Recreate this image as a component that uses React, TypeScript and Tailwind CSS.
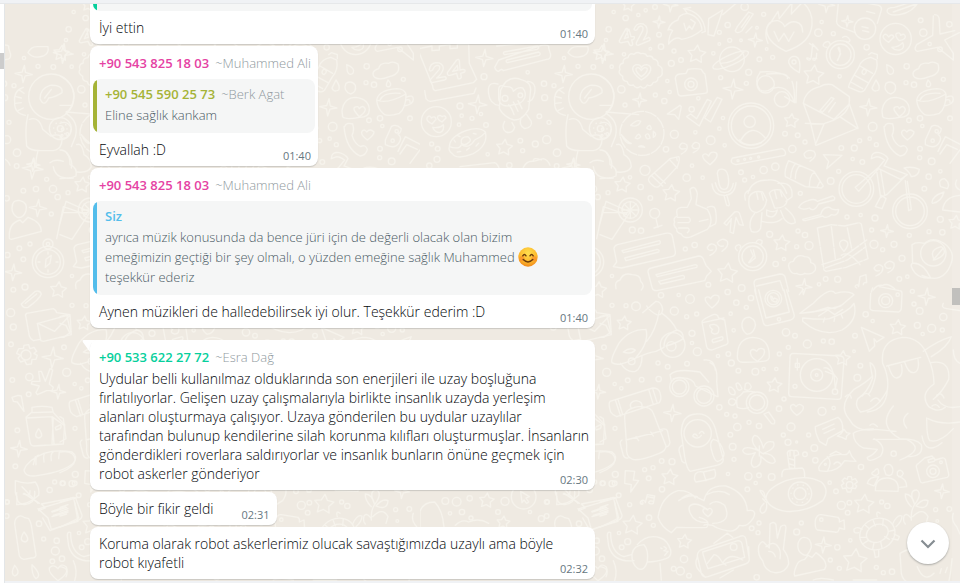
import type { ReactNode } from "react";

type Dot = [number, number, number];

function starPath(cx: number, cy: number, r: number, points = 5, inner = 0.52, turn = 0.1) {
  const parts: string[] = [];
  for (let i = 0; i < points * 2; i++) {
    const radius = i % 2 === 0 ? r : r * inner;
    const angle = (Math.PI * i) / points - Math.PI / 2 + turn;
    parts.push(`${(cx + radius * Math.cos(angle)).toFixed(1)} ${(cy + radius * Math.sin(angle)).toFixed(1)}`);
  }
  return `M${parts.join("L")}Z`;
}

function Dots({ items }: { items: Dot[] }) {
  return (
    <>
      {items.map(([x, y, r], i) => (
        <circle key={i} cx={x} cy={y} r={r} />
      ))}
    </>
  );
}

function Stars({ items }: { items: Dot[] }) {
  return (
    <>
      {items.map(([x, y, r], i) => (
        <path key={i} d={starPath(x, y, r)} />
      ))}
    </>
  );
}

function Sparkles({ items }: { items: Dot[] }) {
  return (
    <>
      {items.map(([x, y, r], i) => (
        <path key={i} d={starPath(x, y, r, 4, 0.28, 0.08)} />
      ))}
    </>
  );
}

const upperDots: Dot[] = [
  [41, 36, 5], [77, 54, 8], [115, 45, 5], [137, 31, 5], [165, 21, 7], [26, 88, 8], [18, 120, 5], [72, 163, 5],
  [151, 146, 4], [183, 140, 8], [177, 104, 7], [222, 153, 6], [214, 190, 9], [243, 180, 7], [35, 200, 5], [202, 243, 5],
  [64, 268, 11], [209, 276, 5], [166, 285, 6], [193, 303, 8], [75, 315, 6], [295, 295, 5], [340, 160, 5], [383, 75, 8],
  [358, 97, 6], [389, 121, 6], [423, 121, 4], [358, 132, 4], [434, 20, 11], [491, 43, 6], [471, 83, 4], [478, 178, 7],
  [500, 147, 4], [518, 172, 6], [446, 217, 9], [362, 233, 6], [439, 250, 6], [665, 66, 5], [655, 98, 11], [700, 101, 6],
  [800, 142, 8], [719, 229, 5], [962, 61, 7], [970, 98, 11], [1048, 73, 8], [989, 132, 5], [1020, 148, 7], [920, 199, 8],
  [918, 248, 6], [942, 254, 8], [1030, 238, 6], [927, 361, 7], [960, 355, 8], [1050, 355, 7], [967, 378, 5], [818, 380, 13],
  [829, 434, 6], [809, 416, 5], [779, 422, 6], [763, 444, 9], [724, 444, 7], [758, 477, 5], [787, 486, 7], [716, 514, 6],
  [555, 401, 7], [593, 406, 7], [615, 426, 6], [577, 447, 11], [526, 500, 11], [491, 510, 11], [423, 517, 7], [434, 540, 6],
  [459, 531, 5], [369, 354, 5], [358, 386, 5], [275, 328, 8], [286, 397, 5], [223, 403, 12], [332, 421, 13], [374, 436, 5],
  [198, 448, 8], [276, 497, 5], [260, 533, 11], [308, 533, 5], [135, 511, 15], [90, 532, 5], [122, 561, 8], [151, 594, 7],
  [24, 578, 6], [97, 690, 9], [123, 692, 8], [284, 735, 8], [256, 747, 6], [36, 828, 5], [692, 543, 10], [601, 580, 6],
  [986, 530, 8], [959, 473, 6], [995, 484, 10], [960, 446, 7], [1021, 514, 5], [973, 566, 7], [1021, 658, 9], [987, 695, 6],
  [1027, 697, 8], [928, 706, 6], [825, 654, 9], [815, 690, 6], [782, 645, 5], [741, 651, 6], [822, 733, 12], [848, 749, 6],
  [882, 733, 9], [906, 775, 9], [898, 837, 7], [922, 830, 5], [713, 838, 9], [677, 837, 7], [627, 737, 12], [590, 740, 6],
  [615, 705, 8], [594, 693, 6], [509, 703, 9], [552, 777, 5], [527, 792, 8], [657, 853, 5], [325, 854, 7], [425, 864, 10],
];

const lowerDots: Dot[] = [
  [36, 46, 6], [78, 47, 6], [108, 49, 13], [183, 16, 8], [236, 15, 5], [270, 27, 13], [223, 63, 12], [260, 80, 6],
  [290, 72, 6], [383, 6, 8], [409, 38, 8], [439, 52, 6], [453, 24, 8], [392, 71, 5], [401, 121, 5], [276, 130, 9],
  [276, 159, 5], [292, 185, 12], [12, 172, 7], [20, 247, 12], [44, 282, 5], [83, 271, 7], [64, 295, 5], [125, 269, 7],
  [176, 267, 8], [203, 230, 7], [174, 219, 6], [261, 221, 7], [354, 198, 5], [385, 192, 7], [394, 219, 9], [415, 242, 7],
  [466, 245, 10], [491, 237, 5], [529, 237, 5], [538, 192, 6], [565, 172, 6], [558, 127, 11], [585, 137, 7], [622, 162, 12],
  [670, 153, 6], [695, 155, 8], [765, 137, 7], [797, 73, 8], [818, 93, 5], [893, 14, 5], [937, 4, 6], [942, 42, 6],
  [959, 63, 10], [1030, 81, 11], [952, 106, 9], [995, 115, 12], [968, 132, 5], [1027, 120, 6], [781, 227, 7], [772, 263, 10],
  [762, 184, 4], [552, 327, 6], [537, 356, 8], [573, 411, 12], [626, 435, 6], [666, 364, 12], [701, 354, 5], [358, 352, 8],
  [380, 373, 6], [405, 378, 6], [412, 411, 11], [447, 397, 6], [477, 408, 8], [391, 434, 7], [398, 470, 10], [402, 508, 6],
  [550, 435, 6], [564, 457, 9], [590, 456, 3], [643, 474, 10], [615, 493, 7], [646, 511, 8], [384, 552, 5], [445, 559, 11],
  [477, 556, 7], [515, 561, 10], [467, 579, 5], [442, 598, 7], [783, 531, 8], [881, 491, 8], [689, 578, 5], [708, 604, 7],
  [724, 646, 12], [748, 638, 7], [743, 668, 7], [845, 636, 6], [862, 648, 8], [45, 415, 6], [46, 553, 9], [36, 581, 9],
  [9, 580, 7], [134, 539, 6], [159, 533, 6], [185, 513, 7], [216, 515, 9], [146, 565, 7], [186, 598, 8], [56, 616, 7],
  [89, 644, 6], [125, 639, 4], [147, 683, 8], [160, 706, 6], [57, 729, 5], [83, 755, 9], [65, 772, 7], [6, 806, 8],
  [252, 807, 11], [221, 836, 7], [241, 843, 12], [267, 857, 7], [455, 715, 7], [477, 699, 6], [474, 728, 6], [470, 862, 8],
  [590, 726, 9], [604, 699, 6], [712, 772, 8], [751, 751, 5], [691, 810, 6], [718, 835, 6], [829, 832, 6], [850, 848, 6],
  [876, 845, 8], [1007, 659, 6], [1048, 657, 7], [1012, 693, 4],
];

const bandDots: Dot[] = [
  [480, 318, 9], [485, 347, 5], [516, 355, 6], [543, 342, 5], [552, 230, 9], [558, 375, 7], [563, 463, 5], [477, 374, 5],
  [661, 422, 7], [668, 452, 6], [706, 432, 9], [740, 419, 12], [718, 349, 7], [747, 367, 6], [734, 293, 9], [732, 251, 8],
  [762, 257, 6], [683, 217, 5], [792, 174, 5], [771, 458, 11], [834, 199, 6], [880, 201, 7], [395, 432, 6], [413, 446, 7],
  [388, 497, 8], [411, 478, 9], [628, 496, 8],
];

const edgeDots: Dot[] = [
  [50, 18, 7], [20, 115, 8], [70, 92, 7], [108, 87, 8], [140, 58, 6], [159, 87, 11], [173, 111, 8], [154, 162, 6],
  [90, 252, 6], [58, 265, 7], [70, 298, 7], [22, 285, 8], [40, 389, 7], [75, 381, 9], [32, 458, 12], [40, 501, 9],
  [33, 553, 7], [37, 660, 7], [88, 651, 11], [52, 811, 7], [46, 919, 7], [149, 990, 8], [164, 966, 6], [22, 1026, 6],
  [20, 1068, 7], [117, 1091, 8], [131, 1137, 6], [170, 1142, 8], [166, 1173, 12], [157, 1204, 7], [86, 703, 7],
];

function Wallpaper() {
  return (
    <svg aria-hidden="true" className="pointer-events-none absolute inset-0 h-full w-full">
      <defs>
        <pattern id="doodles" x="420" y="0" width="540" height="583" patternUnits="userSpaceOnUse" viewBox="420 0 540 583">
          <g fill="none" stroke="#f6f3ec" strokeWidth="4" strokeLinecap="round" strokeLinejoin="round">
            <g transform="translate(600 0) scale(.33333)">
              <Dots items={upperDots} />
              <Stars items={[[290, 163, 28], [641, 226, 31], [574, 363, 22], [67, 555, 24], [213, 580, 26], [545, 730, 25], [382, 820, 31], [85, 15, 20], [1067, 668, 22], [4, 160, 24]]} />
              <Sparkles items={[[177, 66, 18], [466, 120, 21], [399, 267, 30], [119, 300, 21], [805, 322, 26], [861, 693, 19], [212, 14, 22], [680, 14, 24], [612, 860, 24], [742, 64, 17]]} />
              <path d="M78 86l-20 36q0 8 8 6l18-4 6 12q8 2 8-4l-3-12q10-2 8-10l-10 0-6-22q-8-2-6 4l4 20-12 4 12-26q-2-6-7-4zM102 88q8-22 28-16 18 10 8 34l-8 14 16-8q8 4 2 10l-34 14q-8-2-4-10l18-34q4-14-6-14-8 2-10 10-6 6-10 0z" />
              <path d="M122 161q14-4 20 8 14-4 18 8 16 2 14 18 16 8 12 20 4 12-12 18 0 14-14 14-6 14-18 8-10 16-20 4-14 10-22-4-16 4-18-10-16-2-14-16-16-10-8-20-6-16 10-20-4-14 14-16 4-16 18-10 8-10 20-2z" />
              <path d="M124 240q-26-20-26-34 2-12 14-12 10 0 12 10 4-10 16-10 14 2 12 16-4 16-28 30z" />
              <path d="M124 230q-18-14-16-24 8-8 16 6 8-14 18-6 0 12-18 24z" />
              <path d="M240 222l18-2 6-12q22-4 40 0l6 10q6 2 6 10l6 44q0 8-8 8l-70 8q-8 0-10-8l-8-44q0-12 14-14z" />
              <circle cx="273" cy="253" r="19" /><circle cx="273" cy="253" r="9" />
              <path d="M262 40q40 10 44 50-30 24-62 28-8-8-24 0-12 8-14 14 0-24 12-40-10-6-14-2 8-24 30-30 0-16 28-20zM250 26q60 10 66 68l-10 4M252 70l6 22 10-14 8 10 10-20-14-10M262 40l-10-14 20-4" />
              <path d="M368 30l-26 78-18-4 2-48zM368 44l52-44M412 80l34-44 14 6-34 50q-16 12-20 0zM424 82l24-34M456 80l-18 18" />
              <circle cx="396" cy="178" r="37" /><ellipse cx="392" cy="180" rx="58" ry="15" transform="rotate(-24 392 180)" /><path d="M362 190q40 0 70-34" />
              <path d="M504 130q-16-40 8-62l22-34 4 22 38-48-2 34 34-36q32 30 28 68-4 56-78 80-62-30-58-70 6-24 34-22 16 6 20 18 16-18 34-14 20 4 20 30M522 94l14 30 16-24 14 24 16-28" />
              <path d="M728-4l108 20q10 4 8 14l-12 40M710 62q-2 12 14 20l42 16M716-2l-6 64M800 34l24 6M786 80l18 4M788 92l18 4" />
              <circle cx="795" cy="86" r="32" />
              <path d="M862 36q-4-14 22-14l76-24q-20 40-62 46-30 4-36-8zM880 36l68-24" />
              <circle cx="887" cy="117" r="47" />
              <path d="M866 127q-20-12-16-20 8-10 16 4 10-12 16 0zM898 122q-16-16-8-22 10-4 12 6 12-8 14 4 0 8-18 12zM876 142q20 0 32-14 8 16-8 22-16 2-24-8z" />
              <path d="M1004 44q14 0 14 18l2 40 44-10M1000 48l-2 58-48 28q-10 16 2 20l60-12 48 38 0-20-26-40 44-22" />
              <circle cx="721" cy="164" r="42" /><circle cx="721" cy="164" r="32" /><path d="M722 162l-8-18M722 162l-10 20M716 142q6 6 4 20l-6 18M680 142q-16-2-8-12 14-12 18 2M728 112q12-8 22 8-2 10-12 4" />
              <path d="M630 176q-14-6-8 2 10 8 12-10l4-36 16 18M650 176q-16-4-10 4 10 4 10-20M628 130l22 14" />
              <path d="M598 218q-36-20-32-36 6-16 22-12 16 6 10 48z" /><circle cx="582" cy="186" r="6" />
              <path d="M812 172l18 8q6 30-14 52l-22 38q-8 10-24 2t-24-10q-2-8 30-60 6-24 36-30zM806 164l8-6 18 6 0 12M780 198l38 22M752 246l36 20M764 226l40 22M792 206q14 8 0 18-12-4 0-18z" />
              <path d="M860 194q26 10 20 24-12 12-18-4zM828 240q14 20 8 30-16 8-20-6zM858 250q18-10 28 6 4 20-14 26-24-10-14-32zM984 240q14 14 4 20-12 2-8-10z" />
              <path d="M944 232q-14-18 12-26 4-20 30-16 12-8 28 2 10 30-26 38-28 12-44 2z" />
              <path d="M480 216q60-6 88 18M500 222q70-6 62 14M576 244q8 20 8 64l-30-18M590 246l-2 62M480 218q-20 26 0 52 20 10 40-8M522 264q30-8 48 18 8 8 12 24" />
              <circle cx="497" cy="253" r="26" /><circle cx="546" cy="298" r="23" />
              <path d="M610 310q6-40 50-50 16-10 36-6l52 36q4 40-28 60-20 14-46 20M610 310l22 60 16 66 126-52-26-72-46 46zM616 370l56 2-26 62M722 352l52 34M660 332l34-40 8 4-34 40zM686 336l20-28" />
              <path d="M202 342l38-26 4 4-8 38-12-14zM260 350l12-8 18 14 32-58 12 6-36 74zM314 354l38-62 14 6-34 68z" />
              <circle cx="453" cy="377" r="68" /><circle cx="453" cy="377" r="59" /><circle cx="449" cy="365" r="17" /><path d="M420 424q34-60 76-10M418 420q20 24 66 8" />
              <path d="M846 332q6-40 42-40 40 6 40 38 0 22-30 22-44 8-50-2zM898 350q-22-22-14-28 10-6 14 4 12-14 18 2 0 10-18 22z" />
              <path d="M950 300q6-30 60-34 24 0 28 18 0 40-20 56-30 10-44 4-22-16-24-44zM950 300q30 14 88-18M960 300q10-24 60-20M1038 292q22-10 22 6t-28 20M1038 300q14-4 12 8" />
              <circle cx="126" cy="400" r="66" strokeDasharray="34 6" /><path d="M92 376q20-20 30-12-8 20-30 12zM106 414q10-20 16-4-6 10-16 4zM140 384q10-16 14 2-6 6-14-2zM136 406q10-12 14 8-10 8-14-8zM64 404q20 24 30 26-14 6-30-26zM116 440q10-6 18 2zM160 394q14 10 0 18z" />
              <path d="M0 228q40 20 42 60-4 40-24 48l98 8M0 316h34M18 340q40 24 28 70l-12 30M0 370q22-10 34 14-4 36-34 30M50 434q16-8 22 30 20 10 22 36-10 20-42 16M0 450q30 0 30 44 24 10 18 34-20 8-48 8" />
              <circle cx="8" cy="388" r="4" /><circle cx="22" cy="402" r="4" /><circle cx="6" cy="406" r="3" />
              <path d="M244 462q24-12 16-28-16-12-22 6 4 10 18 6M280 458q22-10 18-26-14-12-22 6 4 12 18 6M330 494q-24-18-22-28 8-10 18 2 6-16 22-10 12 10-18 36z" />
              <path d="M148 532l62-56 26-6q6 4-4 30l-56 60q-10 4-18-4-18-14-10-24zM164 520l32 30M156 528l32 30M208 478l24 26M230 474l2 8" />
              <path d="M352 520q2-16 18-12 14 2 16 34 0 26-14 26-14 0-16-24zM336 552q4 34 36 34t36-38M346 548q6 30 28 30 22-2 26-28M372 586l8 30q10 4 8-4l-8-28" />
              <path d="M398 474l148-28q16 8 8 20l-146 28q-20-4-12-18z" /><g><circle cx="414" cy="482" r="3" /><circle cx="434" cy="478" r="3" /><circle cx="452" cy="475" r="3" /><circle cx="476" cy="471" r="3" /></g>
              <path d="M630 484q24-16 12-30-20-8-30 8 2 18 22 10M670 464l56 2-46 40 6-22z" />
              <path d="M566 482l76 32 28 44-6 6-48-4-60-30q-4-20 10-48zM588 490q-14 12-16 42M600 496q-14 14-14 40M644 516q-16 10-16 44M660 544l-8 16" />
              <path d="M854 380q4-14 24-8 6 20-2 34 8 26 26 34 14-8 20 8-4 18-22 20-42-20-48-88zM922 420q-22-16-16-26 8-8 14 2 10-12 22 0 0 10-20 24zM976 420l18-40q14-10 30 6-2 14-10 16 14 12 2 28-12 18-40 4zM1014 454l22-44 46 24M1020 462l20-28 32 14M1050 490l30-40" />
              <circle cx="1010" cy="394" r="5" /><circle cx="998" cy="422" r="5" />
              <circle cx="769" cy="567" r="52" /><circle cx="769" cy="567" r="43" /><circle cx="930" cy="634" r="52" /><circle cx="930" cy="634" r="43" />
              <path d="M766 562l72-62 16-20q-20-14-30-8l-10 4q0-22 24-18 20 6 26 18l-12 22 70 26-20 14-66-32-60 68zM830 512l12 80 18-8 54-54M842 512l12 72M916 542l10 90 8-4-12-84M826 620l18-34 14 10-12 30zM912 504q24-6 46 4-2 20-24 22-6-16-22-26z" />
              <path d="M444 580q10-40 60-40 40-4 56 40M436 600q-8-24 14-30M534 550q46-6 42 40l-18 14M448 590q10-20 40-14l12 24q-4 30-30 38-30-4-22-48zM508 580q8-14 34-10l20 30q-4 26-38 24zM470 578l4 20M484 576l6 24M524 572l6 24M540 570l6 20M500 630q20 10 32 0-8 30-32 16zM464 640q-22 26-10 54 20 8 28-10l4-46M556 624q30 24 30 44-18 10-34-12l-10-24M486 664q40 10 60-8" />
              <path d="M270 568q16-16 22 14l-4 32 34 14q22 36 0 60l-48 22q-22 8-30-8-16-4-14-16-12-10-6-20-6-12 8-18-8-24 12-26h18l12-26zM322 622q20-8 24 6 6 32 0 44l-16 8M298 664l26-6M232 652h34q10 10 0 16h-32M236 684h28q8 6-2 14" />
              <path d="M372 670l32-34q14-4 16 8l10 32-12-2-10-22-8 48-10-4 4-40-14 20z" />
              <path d="M596 622q10-16 28-20 20-8 28 2l46-16q10 4 4 12l-46 12q-14 26-28 12-20 8-32-2zM608 658l54-14q6-24 26-22 10 10 28 6-2 22-22 16-16 14-26 4l-52 14q-8 0-8-4z" />
              <circle cx="91" cy="630" r="36" /><circle cx="91" cy="630" r="25" /><path d="M91 605v50M66 630h50M72 612l36 36M108 612l-36 36M0 670l18-66 72 32-54 82-36-14M10 638h72" />
              <circle cx="164" cy="640" r="15" /><path d="M168 656l6 26M162 684l24-8" />
              <path d="M52 734l144-34q20-4 22 12l8 42q2 14-12 16l-150 34-24-4 10-14-8-40q0-8 10-12zM66 752l112-30q6 4 0 10l-108 26zM74 774l98-26q8 2 4 8l-98 26z" />
              <path d="M154 804l142-36q12 0 16 14l6 14 16 18-14 14-6 14-144 30q-12 0-14-10l-12-46q0-10 10-12zM168 824l118-30q8 2 4 8l-118 28zM176 844l72-18q8 2 4 10l-70 16z" />
              <path d="M330 766q24-12 18-28-16-14-26 4 2 12 16 8M366 754q22-14 16-30-16-14-30 4 4 14 18 10M828 828q24-10 20-28-14-14-26 4 4 12 16 8M864 818q22-10 18-28-16-14-28 4 2 14 18 10" />
              <circle cx="458" cy="770" r="42" /><circle cx="458" cy="770" r="32" /><path d="M452 750l8 18-14 20M460 750l6 24-18 14M412 752q-14-12 4-18 10 4 4 10M468 728q4-14 18-6 2 10-6 12" />
              <path d="M568 806q-8-20 12-22 10-24 34-14 20 0 18 18 18 4 14 22-10 16-32 10-12 8-24 0-16 4-22-14z" />
              <path d="M652 684l42-10 40 4 44-10 6 4 20 104-66 26-60 12-6-4zM666 794l60-20 74-54M676 804l66-24 56-40M694 680l12 96M742 684l14 66M724 766q20-16 56 28" strokeDasharray="60 5" />
              <path d="M732 754q-20-22-10-30 10-8 20 2 6 10-10 28z" />
              <path d="M936 734q12-10 38-4 24-22 58 0 36 26 20 64-24 60-86 32M936 734l2 56q30-4 54 44-30 2-46-14-20-26-8-30M1004 780q-20-30 20-40 26 20-20 40zM1000 780l30-36" /><circle cx="1000" cy="760" r="38" />
              <path d="M48 866q-6-22 12-26 10-24 36-16 26 0 26 20 14 14 2 26M468 880l-6-30q0-10 8-12l70-16q14 0 16 12l10 40M470 858l70-16 10 30M770 864q-10-6 2-10l4 6 4-30 18-6 2 24q-10-2-10 6M820 870q10-16 28-14 14-8 36 10" />
              <path d="M996 608q0-20 36-32-8 30-34 34M1022 560q-10-22 12-24 18 14 8 30zM1028 630q4-40 52-44M1028 630l52 6M1070 540q-10 20 10 30" />
            </g>
            <g transform="translate(600 290) scale(.33333)">
              <Dots items={lowerDots} />
              <Stars items={[[72, 100, 22], [893, 113, 24], [728, 205, 23], [523, 286, 23], [209, 562, 25], [97, 706, 30], [253, 755, 22], [792, 643, 30], [765, 813, 37]]} />
              <Sparkles items={[[217, 369, 26], [980, 20, 26], [1026, 604, 22], [670, 765, 24]]} />
              <path d="M128 68l40-34q16 0 20 24-2 20-18 16-20-10-30-26M178 62q-10 60-38 92M186 70q30 20 44 50M138 118q-50 0-80 40-28 50-22 60 20 14 72-14 40-18 60-20l24-12q0-40 40-52 18 4 18 26-20 14-52 22M138 118q10 40-30 84M62 220q20 30 44 24 20-10 20-46M70 186q20-16 36-6-12 14-36 6z" />
              <circle cx="218" cy="165" r="37" /><circle cx="214" cy="169" r="14" /><circle cx="95" cy="214" r="10" />
              <path d="M0 80l20-6 12 52-20 16H0M0 100l18 6 12 24" />
              <path d="M336 54q-24-20-20-30 8-8 16 2 8-16 24-8 8 14-20 36z" />
              <path d="M306 96q0-8 34-22 12-4 16 10l18 6 10 66q0 8-12 10l-36 14q-14 0-16-10zM308 98l64-14M336 118q-14-14 0-14 12-4 20 8 4 20-12 20-16-4-6-14M338 148l28-8q6 4 0 10l-26 8q-6-4-2-10z" />
              <path d="M426 100q4-20 24-18 22 10 14 32-8 20-24 18-16-12-14-32zM412 200q0-56 46-58 50 2 50 56 2 14-20 16-50 4-66 2-10-4-10-16zM472 214q-26-16-20-32 8-8 18 2 8-14 22-6 8 16-20 36z" />
              <path d="M464 0l26 98q4 12 16 8l66-16q14-6 10-18L560 0M476 0l22 84 70-18L552 0" /><circle cx="520" cy="26" r="25" /><circle cx="520" cy="26" r="18" /><circle cx="537" cy="88" r="5" /><path d="M512 18q0 18 18 18l2-8-8-4-4 4-4-8z" />
              <path d="M598 14l12-16M600 70l40-30Q690-12 706 10q40-10 56 4l-40 34q-56 16-122 22zM608 84q60 6 80 2 60-22 74-46 14 50-36 80-60 24-118-26zM640 66l44-14 20 4 26-14M656 78l28-18 20 14 24-16M670 96l4-12M702 94l2-10M728 84l-4-10" />
              <path d="M814 6l4-12M812 10l-2 42q0 10 10 10l76 4q8-4 8-12l2-44q0-8-8-8l-60-12" /><circle cx="857" cy="32" r="21" /><circle cx="857" cy="32" r="12" />
              <path d="M784 112l68 30-22 14-8-10 2 22-16 16z" />
              <path d="M578 190l144 8q10 2 10 12l-8 108q0 10-10 10l-140-8q-8 0-8-10l4-110q0-8 8-10zM592 206v34M586 220h12v12h-12zM672 234q10-4 26 14l14 18-6 30M676 244l26 10 4 42" /><circle cx="650" cy="255" r="49" /><circle cx="650" cy="255" r="18" /><circle cx="650" cy="255" r="4" /><circle cx="585" cy="289" r="6" /><circle cx="705" cy="305" r="8" />
              <path d="M848 220q-8-70 60-78 56 0 76 60 18 40 18 80-44 30-16 68 30 20 50 2M848 220q20 40 14 80-30 60-80 66-20-20-8-40 30-20 44-62-6-30-8-46 20 10 16 44-10 40-20 50M862 300q-4 60-60 66M818 258q-20 20-56 40-50 50-14 90 20 40 80 30l60 6M860 228l102-26M866 230q10 34 24 34 22-4 14-40M914 216q10 34 28 32 18-6 12-40M880 348q-50 60 20 98 50 0 64 18 8 36-44 36M924 370q-24 20-4 44M760 430q10-10 60-14M760 430q0 30 30 44l42 4q-10 16-30 24 0 20 40-4 20-30-20-52M820 448l100 0q60 30-20 62M966 438q10 60 60 20M970 184q40-30 84-44-10 30-60 60M992 218q60-10 54 50-20 40-46 60M1014 330q20 30 66 20M980 384q0 60 10 68 30 8 70-36M984 386q40 20 96 10" />
              <path d="M736 320q14-14 18 4M786 318q14-16 24 0M812 334q18-20 28 0M810 406q10-10 22 4M1010 316q14-12 22 8M996 348q12-10 22 4" />
              <path d="M210 254q20-20 90-8l26 30M210 254l4 20M330 218q24 10 20 56l4 46M312 210q30-4 34 30M220 266q60-10 66 22l66 32" /><circle cx="238" cy="291" r="29" /><circle cx="238" cy="291" r="21" /><circle cx="312" cy="318" r="30" /><circle cx="312" cy="318" r="22" />
              <path d="M386 300q-2-12 8-8 16 12 10 22-16 2-18-14zM386 332q8-12 22 0-2 14-12 14-12-2-10-14zM408 282q8-10 18 14-14 14-18-14zM436 282q10-10 18 8-6 16-20 8zM410 324q16-10 20-18 24-4 34 0M412 352q-4-20 0-28M412 352q18 8 34 0M492 372l14-6 18 26q2 14-10 8z" /><circle cx="471" cy="338" r="32" /><circle cx="471" cy="338" r="23" />
              <path d="M590 376q-22-18-18-28 8-10 16 2 10-14 22 0 2 14-20 26z" />
              <path d="M30 334l128-40q18 0 22 14 6 20-2 30l-128 42q-12-4-18-14-8-24-2-32zM46 330l16 48M54 328l14 46M146 298l14 46M158 296l14 44M74 386q-4-28 40-36 40-2 46 20l38 98q0 14-20 22-60 24-80 18-22-6-18-40zM66 450q-8 4-4 16l8 30q4 10 14 8M182 418q16-4 20 4l8 36q-4 14-12 12M78 450l110-28M94 356q-10-20 14-24 24 4 16 20M108 440l8 12M152 426l8 12" />
              <path d="M244 430q0-56 44-58 50-4 62 60l20 76q0 14-20 18l-80 18q-10-8-16-44zM246 466q-12 6-8 20l8 28q6 6 10 4M340 448q-12 10-6 30 10 40 20 36 18-4 18-24-10-40-32-42zM286 552q8-10 24-6l34-8q6 20-2 26-26 8-54 12-8-8-2-24zM310 546l8 26M278 438q6-12 14 0M298 430q8-12 14 0M280 440q14 10 24-4" /><circle cx="293" cy="430" r="41" />
              <path d="M476 482q-30-30-12-46 16 0 26 38 6-24 30-18 10 20-30 34 30 0 36 24-10 18-44-16 6 30-20 34-18-10 4-44-30 12-38-6 6-18 48 0zM466 476l24 16M478 468v30" />
              <path d="M646 410l68-28q16 10 14 40l-44 24-6 20-20-12q-14-30-12-44zM668 418l34-16M672 430l32-14M732 418l8 10 10 2-10 8-2 10-12-6-14-4 10-6z" />
              <path d="M656 532q24-44 78-38 10 0 14-12l8 18 12 14q-20 0-34-2-24 40-76 30zM682 500q16 14 0 44M702 522q10-12 20 0M690 494l18-10 16 8" /><circle cx="676" cy="523" r="3" />
              <path d="M562 488q4-10 20-6 14-4 14 12l-12 4v38l-16-2zM570 484v14M582 484v14M568 506l14 4M568 522l14 4M546 560q-2-20 10-22l50-4q8 2 8 26M498 626q0-30 60-54 60-20 106 4 26 24 4 56-50 36-110 32-50-8-60-38zM498 628q-24-32-16-26 12-2 14 26zM488 626l12 12M492 640q-20 20-6 30 16-4 14-28" /><circle cx="600" cy="611" r="35" /><circle cx="600" cy="611" r="18" /><circle cx="600" cy="611" r="27" strokeDasharray="1 16" />
              <path d="M76 542l28 2-4 26 16 2-24 34 2-22-20-4zM128 642q-12-2-4-10 10-4 12 6l6-24 22 4-4 22q-8 4-14-2 2-8 14-4M142 620l20 4" />
              <path d="M174 682q10-64 60-80 28-2 48 16l30 14q10-48 66-44 60 20 64 74 20-4 22 8 0 16-20 32-10 8-26 4-12 22-38 16-30-6-42-16-26-4-26 0M338 700q60-2 36-54-24-20-44-4M322 698q-40 0-52-30-10-24 14-26 20 2 36 16M174 682q10 30 40 46l16-16q60 2 90 0 14-20-22-30M236 632q30-20 56-12M320 614q40-20 68 0M246 624q30-20 40 0" /><path d="M324 680q-20-14-14-22 8-6 12 2 8-10 14 0 4 8-12 20z" />
              <path d="M744 560l10 0 2 10 10-4 6 10-8 6 6 6-4 8-10-2-4 12h-10l-4-12-10 2-4-10 8-6-6-8 8-8 8 4z" /><circle cx="749" cy="585" r="10" />
              <path d="M852 536q4-16 18-12 14 10 6 28-6 8-18 2zM822 544q14-18 14 6-10 12-20 2-2-4 6-8zM892 546q10-12 18 4-6 16-18 6zM826 602q0-40 38-38 36 4 30 40zM802 580q4-20 34-20l-14 28zM896 560q24 6 24 30l-20 2" />
              <path d="M956 520q-10 4-6 14l10 38q2 8 10 6l72-16q6-4 4-10l-10-44q-4-6-10-4l-20 6-10-12-22 6zM984 510l18-6q6 6 0 10l-16 4z" /><circle cx="999" cy="544" r="19" /><circle cx="999" cy="544" r="9" /><circle cx="1023" cy="517" r="4" />
              <path d="M934 690q-2-30 10-46M944 644q-20-44 6-44 18 10-6 44zM934 650q-20-20-18-38 20 0 28 32M948 648q20-24 36-16-2 30-36 16M938 680q30-30 46 0l-6 20M934 686q-14-20-22-8-4 16 4 24" />
              <path d="M646 692q4-20 18-18l50 8q6 4 4 14l14-6 2 28-16-4q-2 16-14 12l-52-6q-8-4-6-28z" /><circle cx="664" cy="689" r="5" />
              <ellipse cx="832" cy="732" rx="54" ry="46" transform="rotate(-24 832 732)" /><ellipse cx="832" cy="730" rx="34" ry="26" transform="rotate(-24 832 730)" />
              <path d="M780 742l18 0M788 762l16-10M818 778l4-20M846 774l-4-20M868 748l-14-8M884 720l-18 4M850 686l-2 20M820 692l6 16M796 706l12 10M878 702q14-30 28-24 0 16-18 32M776 728q-16 4-14-10 10-10 24 0M832 680q-6-20 8-10M882 732l16 8-4 10-18-4M822 782l4 20 10-2 0-18" />
              <path d="M476 768q10-22 20-6l12 12 2-72q12-10 18 2l4 40 10-34q14-10 16 2l-8 66q16 20 16 44-10 28-42 26-30-4-36-36-16-16-12-44zM498 770q24-20 36 0 10 10 6 36M506 784q16 0 20 16" />
              <path d="M612 742q22 0 22 30-10 30-24 22-20-10-16-34 6-18 18-18zM590 826q4-14 24-18l10-12 12 6 12-14q30 20 30 40l-4 10-90 20q-4-12 6-32z" />
              <path d="M302 780l116-40q16-8 20 8l10 60q0 10-12 14l-112 38q-16 4-20-10l-12-52q0-12 10-18zM308 786l106-34q10 0 12 10l8 40-110 34q-14-36-16-50zM322 820l20-26q12 0 24 22l12 10M370 816q20-30 58-6M342 760l40-30 16 12M292 800q-10 24 4 40l20 22M446 770l2 40M400 840l-40 24" /><circle cx="401" cy="771" r="10" />
              <path d="M32 728q-10-6-10 10l4 30q14 50 76 44M32 728q0 60 40 72l22-6M96 792q4-26 36-28 14 14 10 50-8 30-28 22-20-14-18-44zM112 764q30-34 70-20 20 6 30 36 4 20-14 26-30 10-54 10M182 774l4 2M192 770q14 6 0 12l12 2-10 12M180 820l4 50M40 812q14 30 4 60M0 830q30 4 18 30" />
              <path d="M900 790l4 60q4 20 20 28M900 790q40-24 70-8M1056 806l-4 40-6 32M952 830q20 50 50 20M1020 850l4-14M1036 848l6-16M1060 670q-8 20 10 40l10 22M640 870q20-10 60 0M760 870h70" />
              <path d="M0 380l10 6 8 60-18 10M0 486q40-6 46 22-4 24-46 40M0 636l40-14 16 62-36 18-20 10M0 652l24-8M0 664l24-8M0 678l20-6" />
              <path d="M1030 40q-8 14 10 16l40 6M1060 180q0 30 20 40" />
            </g>
            <g transform="translate(300 0) scale(.33333)">
              <Dots items={bandDots} />
              <Stars items={[[613, 443, 25]]} />
              <Sparkles items={[[553, 174, 26], [533, 313, 28], [791, 222, 26], [910, 160, 30], [820, 494, 20]]} />
              <path d="M356 154q0-10 10-10l30-6v14l22-2v-12l32-4v12l22-2v-12l34 0 2 58 22 48-10 10-114 24q-8-2-8-14zM374 272l4 24q8 10 14 8l130-24 6-16" />
              <path d="M388 210q2-20 20-22 20 0 22 16-2 16-20 30l26-4q6 6-2 10l-38 8q-8-4-4-10l26-30q4-12-6-12-10 2-14 14-8 6-10 0zM470 180l-28 38q0 10 8 8l20-6 4 16q8 2 10-4l-2-12 12-4q4-8-6-8l-8 2-2-28q-2-6-8-2zM472 196l2 14-16 4z" />
              <path d="M590 138l110-10 24-4M724 136q26-4 22 8l6 20q0 14-12 14l-130 34q-4-8-14 2-8 0-12-12l12-22zM612 156l100-18q8 4 0 10l-98 16q-6-4-2-8zM620 180l96-24q8 4 2 10l-96 22q-6-4-2-8z" />
              <path d="M602 270q20-46 60-32 30 8 30 30l-6 60q-20 34-44 32-30-8-44-34zM596 270q0-20 20-10 22-2 24 14 14-14 28-10 12 14 6 30-10 20-34 20-36 12-44-16zM594 252q-34-10-28 30 4 30 30 34M682 244q28 2 22 34-4 26-20 26M626 314q10 10 16 30M640 306q6 10 14 28M654 302q6 12 12 24M614 364q-12 20 4 32 20 6 26-14l-8-14M664 352q-10 24 10 34 24-4 20-22l-14-20" /><circle cx="615" cy="295" r="9" /><circle cx="661" cy="286" r="7" />
              <circle cx="409" cy="365" r="45" /><path d="M396 372q-20-10-14-20 8-8 12 2 12-8 14 4zM426 366q-18-10-12-18 8-4 12 2 10-6 12 4zM398 382q20 4 32-8 4 18-10 24-16 0-22-16z" />
              <path d="M448 440q2-30 50-48 40-14 58 4 10 40-38 66-48 18-60 0-14-10-10-22zM484 430q-4-20 20-20 12 10 4 16-14 14-24 4zM448 440q30 10 36-6 24 14 40-14 20-8 32-22M462 420l4 6M472 406l8 4M520 400l8 2M472 456l10-2M500 450l8-6M528 438l8-8" />
              <path d="M480 500l104-12q10 4 14 20M670 502q10-20 30-18l30-8q14 4 20 20M700 484q0-14 24-4" />
              <circle cx="874" cy="290" r="68" /><path d="M840 296q0-30 30-40 40-2 36 22-20 14-40 16-14 30-26 2zM854 294l20-26M804 344q-10 40-4 94 10 14 40 14l40 0M790 262q-30 10-26 44-2 34 32 40M778 270l14 10M768 290l16 4M766 310l18-2M774 332l16-8M808 358q30-10 40 30l24 20q30-10 34 10 0 30-26 34M834 452q-10 40-4 50M920 460q20 20 14 44" /><circle cx="901" cy="386" r="33" /><circle cx="901" cy="386" r="9" /><circle cx="901" cy="386" r="20" strokeDasharray="1 15" />
              <path d="M804 158q10-20 30-18l30 0q4 20-14 28-30 10-46-10z" />
            </g>
            <g transform="translate(380 450) scale(.33333)">
              <Dots items={[[196, 153, 10], [230, 155, 13], [269, 145, 8], [210, 190, 5], [246, 186, 8], [273, 204, 6], [375, 154, 12], [500, 156, 7], [450, 186, 5], [484, 206, 9], [354, 186, 7], [667, 100, 7], [704, 100, 7]]} />
              <Stars items={[[320, 152, 23], [370, 218, 20]]} />
              <circle cx="431" cy="140" r="37" /><path d="M422 124l26 16-10 4 8 12-6 4-8-10-6 8zM120 230V184q10-28 44-28 24 24 28 76M104 210l-10-10 10-14M226 226q20-20 40-10 30-14 60 4M530 128q-4 34 24 36 34-4 30-40M552 130l46 30M596 182l20-8-12-12 102-20 20 54q0 10-10 14l-86 32-22-38M636 184l40-14M640 196l44-14" />
            </g>
            <g transform="translate(540 160) scale(.33333)">
              <Dots items={edgeDots} />
              <Stars items={[[175, 390, 25]]} />
              <Sparkles items={[[98, 26, 31], [40, 337, 25], [158, 593, 32], [175, 695, 22], [57, 866, 25], [114, 144, 26]]} />
              <path d="M36 144q0-26 24-22 24 6 18 30-8 24-26 20-16-10-16-28zM28 230q-2-40 32-50l8 8 16-16q40 14 40 42l-90 24q-8-2-6-8z" />
              <circle cx="144" cy="306" r="47" /><circle cx="144" cy="306" r="37" /><circle cx="144" cy="252" r="15" /><circle cx="144" cy="252" r="5" /><path d="M154 286l-4 24-14 12 2-24zM144 276v6M174 306h-6M114 306h6M144 336v-6" />
              <path d="M64 432l42-38q14-4 18 8-6 16-40 40-16 4-20-10zM76 430l34-28M80 460l80-14q8 4 10 12l40 6 4 60-84 20q-8 0-10-6l-20 4q-8-4-12-14l-10-56q-4-8 2-12zM114 490l96-26M112 490l10 50M114 490l50 24 46-48" />
              <path d="M72 556l14-2 4 12 12-4 8 12-8 6 10 6-4 12-12 0-2 14-14 2-6-12-12 4-8-12 8-8-12-6 6-14 14 0z" /><circle cx="78" cy="585" r="15" />
              <path d="M116 634l8 0 12 30 14-38 8 4-10 42 12 10-4 10-16 0-28 12-4-6 10-20-24-6 2-8 24 0zM36 712l18-6 10 2 8 46-20-28-12-2z" />
              <path d="M96 756l0-14q30-6 60 0l4 16 34 36-4 58-88 6q-10 0-12-12l-12-74zM96 758l60-2M80 774l76-4 36 26M156 770l6 84M160 772l-4 82M116 806q-18 26 0 28 18-4 0-28zM166 802l16-8q4 8-2 12l-12 4z" />
              <path d="M72 930q10-30 60-50 40-12 84-4 20 14 4 34-30 26-104 36-40 8-44-16zM100 914l6-24M108 914q-2-30 8-28M132 906q-4-26 6-28M154 902q-4-24 8-28M176 896l2-20" />
              <path d="M46 962q30 12 60 4 14 20 10 40-30 28-66 28 4-20-4-36zM66 980l48 50M90 992l-2 18M70 1002l20 4M118 1046l116-34M114 1046l30 28 10 34 80-24-10-56M156 1056l44-14M156 1070l48-14" />
              <path d="M48 1076q10-14 24-4l14 4q6 10 8 20l14 90q-2 8-14 8l-22 4q-10-2-14-10l-14-96q0-10 4-16zM72 1116q-18 28 4 30 16-6-4-30zM44 1216q-14 26 0 32 20-8 0-32zM96 1214q-2 30 12 42 20-10-12-42zM174 1262q-30-24-26-38 12-14 26 2 10-18 24-6 12 18-24 42z" />
              <path d="M150 8q14-12 40-4M160 20q6 40 60 34M170 236l20-96 70 24" />
            </g>
          </g>
        </pattern>
      </defs>
      <rect width="100%" height="100%" fill="url(#doodles)" />
    </svg>
  );
}

function SmileEmoji() {
  return (
    <svg role="img" aria-label="😊" viewBox="0 0 20 20" className="-mt-2 -mb-1 inline-block h-5 w-5 align-middle">
      <defs>
        <radialGradient id="face" cx=".5" cy=".3" r=".75">
          <stop offset="0" stopColor="#ffe04f" />
          <stop offset=".6" stopColor="#fdb92c" />
          <stop offset="1" stopColor="#ee7f17" />
        </radialGradient>
      </defs>
      <circle cx="10" cy="10" r="9.7" fill="url(#face)" />
      <circle cx="4" cy="11.5" r="2.6" fill="#f9852b" opacity=".55" />
      <circle cx="16" cy="11.5" r="2.6" fill="#f9852b" opacity=".55" />
      <g fill="none" stroke="#6b3a0c" strokeWidth="1.4" strokeLinecap="round">
        <path d="M4.8 8.8q1.6-2.6 3.2 0M12 8.8q1.6-2.6 3.2 0M5.2 12.6q4.8 4.6 9.6 0" />
      </g>
    </svg>
  );
}

function Sender({ phone, name, color }: { phone: string; name: string; color: string }) {
  return (
    <div className="flex h-[22px] items-center gap-1.5 whitespace-nowrap text-[13px]">
      <span className={`font-semibold ${color}`}>{phone}</span>
      <span className="font-light text-[#8f999e]">~{name}</span>
    </div>
  );
}

function Bubble({ children, time, fit = false, flatTop = false }: { children: ReactNode; time: string; fit?: boolean; flatTop?: boolean }) {
  return (
    <article
      className={`relative rounded-b-lg bg-white px-[3px] shadow-[0_1px_1px_rgba(11,20,26,0.16)] ${flatTop ? "" : "rounded-t-lg"} ${fit ? "w-fit" : "w-full max-w-[505px]"}`}
    >
      {children}
      <time className="absolute right-[7px] bottom-[3px] text-[11px] leading-[15px] text-[#667781]">{time}</time>
    </article>
  );
}

function Lines({ lines }: { lines: string[] }) {
  return (
    <p className="px-1.5 pb-[7px] text-[14px] leading-[19px] font-light text-[#05090c]">
      {lines.map((line) => (
        <span key={line} className="block whitespace-nowrap">
          {line}
        </span>
      ))}
    </p>
  );
}

function Quote({ bar, children }: { bar: string; children: ReactNode }) {
  return (
    <blockquote className="mb-[7px] flex overflow-hidden rounded-lg bg-[#f5f6f6]">
      <span className={`w-1 shrink-0 ${bar}`} />
      <div className="px-2 pt-1 pb-2 text-[13px] leading-5 font-light whitespace-nowrap text-[#4a5a64]">{children}</div>
    </blockquote>
  );
}

export default function App() {
  return (
    <div className="flex h-screen flex-col overflow-hidden bg-[#f0f2f5] font-['Open_Sans','Noto_Sans',sans-serif]">
      <header className="h-1 shrink-0 border-b border-[#e6e8ea]" />
      <div className="flex min-h-0 flex-1">
        <aside className="w-[5px] shrink-0 border-r border-[#e3e6e8] bg-white pt-[49px]">
          <div className="h-4 bg-[#cccccc]" />
        </aside>
        <main className="relative mb-0.5 flex min-w-0 flex-1 overflow-hidden bg-[#efeae2]">
          <div className="absolute inset-x-0 -top-1 bottom-0 -ml-[5px]">
            <Wallpaper />
          </div>
          <section className="relative flex min-w-0 flex-1 flex-col gap-0.5 pl-[85px]">
            <Bubble time="01:40" flatTop>
              <div className="mb-[7px] flex h-[7px] overflow-hidden rounded-b-lg bg-[#f5f6f6]">
                <span className="w-1 bg-[#06cf9c]" />
              </div>
              <Lines lines={["İyi ettin"]} />
            </Bubble>

            <Bubble time="01:40" fit>
              <div className="pt-[7px] pr-1 pb-1 pl-1.5">
                <Sender phone="+90 543 825 18 03" name="Muhammed Ali" color="text-[#e542a3]" />
              </div>
              <Quote bar="bg-[#a5b337]">
                <Sender phone="+90 545 590 25 73" name="Berk Agat" color="text-[#a5b337]" />
                Eline sağlık kankam
              </Quote>
              <Lines lines={["Eyvallah :D"]} />
            </Bubble>

            <Bubble time="01:40">
              <div className="pt-[7px] pr-1 pb-1 pl-1.5">
                <Sender phone="+90 543 825 18 03" name="Muhammed Ali" color="text-[#e542a3]" />
              </div>
              <Quote bar="bg-[#53bdeb]">
                <div className="h-[22px] leading-[22px] font-semibold text-[#53bdeb]">Siz</div>
                <div>ayrıca müzik konusunda da bence jüri için de değerli olacak olan bizim</div>
                <div>
                  emeğimizin geçtiği bir şey olmalı, o yüzden emeğine sağlık Muhammed <SmileEmoji />
                </div>
                <div>teşekkür ederiz</div>
              </Quote>
              <Lines lines={["Aynen müzikleri de halledebilirsek iyi olur. Teşekkür ederim :D"]} />
            </Bubble>

            <div className="relative mt-2.5">
              <svg aria-hidden="true" viewBox="0 0 16 12" className="absolute top-0 -left-2 h-3 w-4">
                <path d="M1.5 0H16v12H8L.8 2Q0 0 1.5 0z" fill="#fff" />
              </svg>
              <Bubble time="02:30">
                <div className="pt-[7px] pr-1 pl-1.5">
                  <Sender phone="+90 533 622 27 72" name="Esra Dağ" color="text-[#06cf9c]" />
                </div>
                <Lines
                  lines={[
                    "Uydular belli kullanılmaz olduklarında son enerjileri ile uzay boşluğuna",
                    "fırlatılıyorlar. Gelişen uzay çalışmalarıyla birlikte insanlık uzayda yerleşim",
                    "alanları oluşturmaya çalışıyor. Uzaya gönderilen bu uydular uzaylılar",
                    "tarafından bulunup kendilerine silah korunma kılıfları oluşturmuşlar. İnsanların",
                    "gönderdikleri roverlara saldırıyorlar ve insanlık bunların önüne geçmek için",
                    "robot askerler gönderiyor",
                  ]}
                />
              </Bubble>
            </div>

            <Bubble time="02:31" fit>
              <div className="pt-[7px] pr-[54px]">
                <Lines lines={["Böyle bir fikir geldi"]} />
              </div>
            </Bubble>

            <Bubble time="02:32">
              <div className="pt-[7px]">
                <Lines lines={["Koruma olarak robot askerlerimiz olucak savaştığımızda uzaylı ama böyle", "robot kıyafetli"]} />
              </div>
            </Bubble>
          </section>
          <div className="relative w-2 shrink-0 bg-white/10 pt-[284px]">
            <div className="h-[17px] bg-[#c1c0bd]" />
          </div>
          <button
            type="button"
            aria-label="Scroll to bottom"
            className="absolute right-[11px] bottom-[17px] flex h-[42px] w-[42px] items-center justify-center rounded-full bg-white shadow-[0_1px_2px_rgba(11,20,26,0.3)]"
          >
            <svg aria-hidden="true" viewBox="0 0 16 10" className="mt-0.5 h-2.5 w-4" fill="none" stroke="#868d92" strokeWidth="2.2">
              <path d="M1.5 1.5L8 8l6.5-6.5" />
            </svg>
          </button>
        </main>
      </div>
    </div>
  );
}
